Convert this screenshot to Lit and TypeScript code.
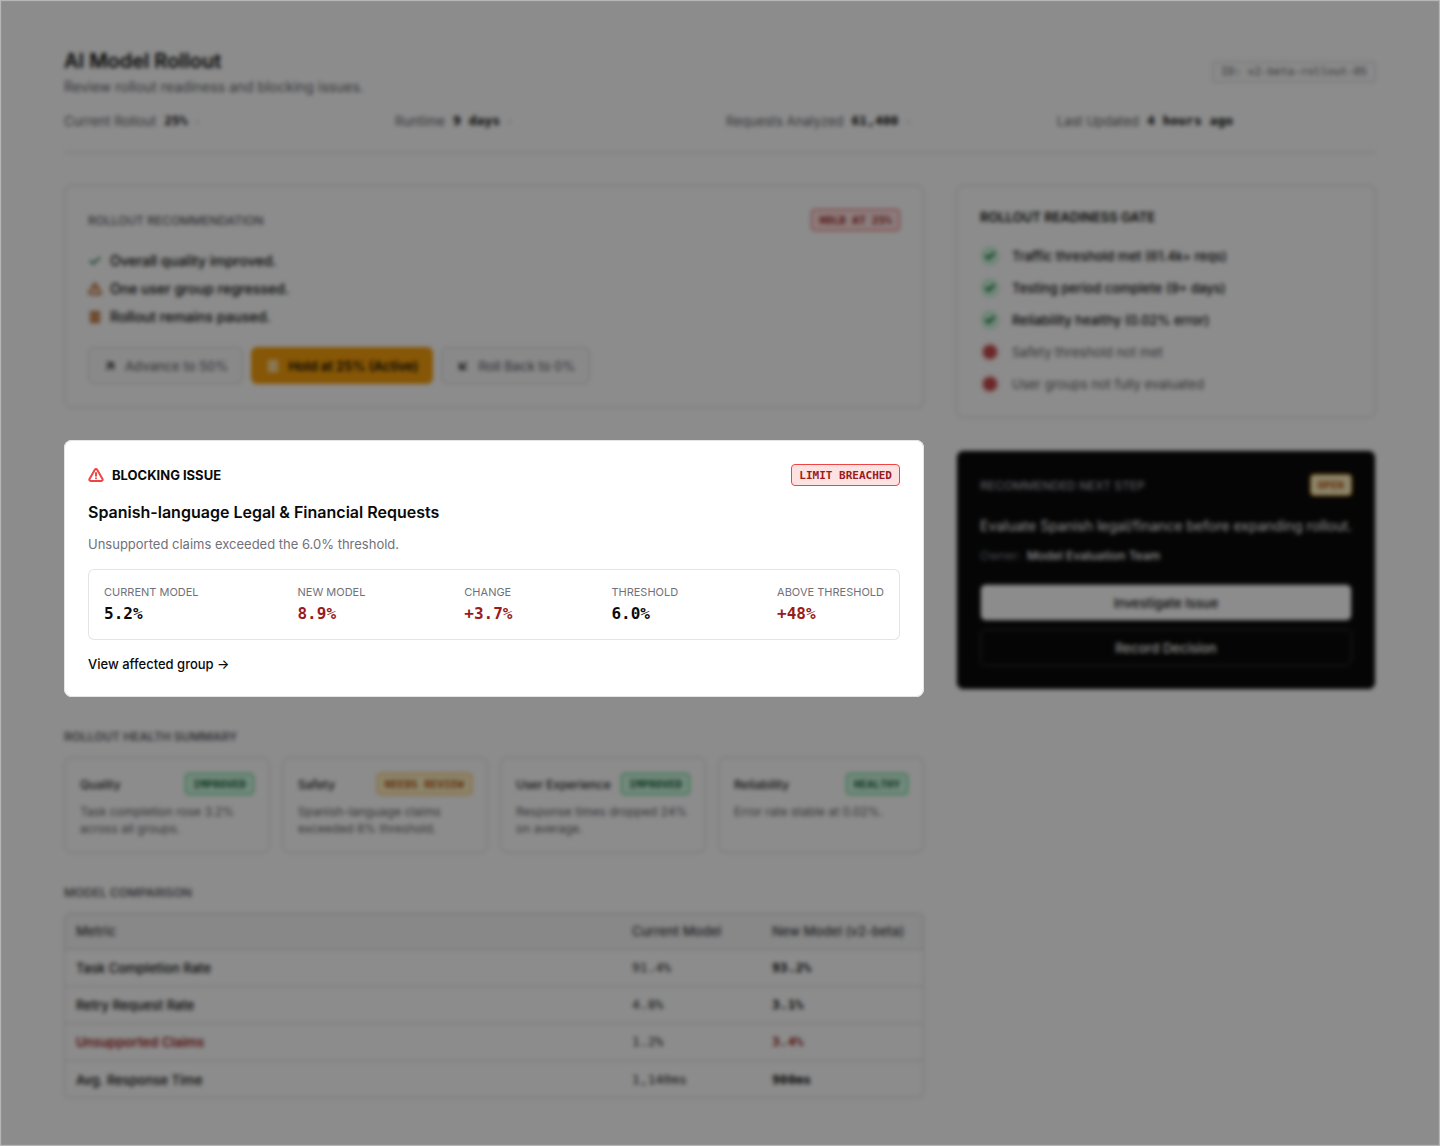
import { LitElement, html, css, svg } from "lit";
import { customElement } from "lit/decorators.js";
import { classMap } from "lit/directives/class-map.js";

type Tone = "danger" | "warning" | "success";

const badge = (text: string, tone: Tone) =>
  html`<span class=${classMap({ badge: true, [tone]: true })}>${text}</span>`;

const icon = (size: number, body: unknown, weight = 2) => html`<svg
  class="icon"
  width=${size}
  height=${size}
  viewBox="0 0 24 24"
  fill="none"
  stroke="currentColor"
  stroke-width=${weight}
  stroke-linecap="round"
  stroke-linejoin="round"
  aria-hidden="true"
>${body}</svg>`;

const checkShape = svg`<path d="M20 6 9 17l-5-5" />`;
const alertShape = svg`<path
    d="m21.730 18-8-14a2 2 0 0 0-3.480 0l-8 14A2 2 0 0 0 4 21h16a2 2 0 0 0 1.730-3"
  /><path d="M12 9v4M12 17h.01" />`;
const pauseShape = svg`<rect x="14" y="3" width="5" height="18" rx="1" /><rect x="5" y="3" width="5" height="18" rx="1" />`;
const upShape = svg`<path d="M7 7h10v10M7 17 17 7" />`;
const downShape = svg`<path d="M17 7 7 17M17 17H7V7" />`;

const facts = [
  ["Current Rollout", "25%"],
  ["Runtime", "9 days"],
  ["Requests Analyzed", "61,400"],
  ["Last Updated", "4 hours ago"],
];

const gates = [
  { label: "Traffic threshold met (61.4k+ reqs)", met: true },
  { label: "Testing period complete (9+ days)", met: true },
  { label: "Reliability healthy (0.02% error)", met: true },
  { label: "Safety threshold not met", met: false },
  { label: "User groups not fully evaluated", met: false },
];

const stats = [
  { label: "CURRENT MODEL", value: "5.2%", bad: false },
  { label: "NEW MODEL", value: "8.9%", bad: true },
  { label: "CHANGE", value: "+3.7%", bad: true },
  { label: "THRESHOLD", value: "6.0%", bad: false },
  { label: "ABOVE THRESHOLD", value: "+48%", bad: true },
];

const health: { name: string; status: string; tone: Tone; note: string }[] = [
  { name: "Quality", status: "IMPROVED", tone: "success", note: "Task completion rose 3.2% across all groups." },
  { name: "Safety", status: "NEEDS REVIEW", tone: "warning", note: "Spanish-language claims exceeded 6% threshold." },
  { name: "User Experience", status: "IMPROVED", tone: "success", note: "Response times dropped 24% on average." },
  { name: "Reliability", status: "HEALTHY", tone: "success", note: "Error rate stable at 0.02%." },
];

const comparison = [
  { metric: "Task Completion Rate", current: "91.4%", next: "93.2%", bad: false },
  { metric: "Retry Request Rate", current: "4.8%", next: "3.1%", bad: false },
  { metric: "Unsupported Claims", current: "1.2%", next: "3.4%", bad: true },
  { metric: "Avg. Response Time", current: "1,140ms", next: "900ms", bad: false },
];

@customElement("app-root")
export class AppRoot extends LitElement {
  static styles = css`
    :host {
      --mono: "DejaVu Sans Mono", "Liberation Mono", monospace;
      --line: #d4d4d8;
      --soft: #5f5f68;
      display: block;
      min-height: 100vh;
      background: #fff;
      color: #0a0a0a;
      font-family: Inter, "Liberation Sans", sans-serif;
      font-size: 13px;
      line-height: 20px;
    }
    * { box-sizing: border-box; }
    h1, h2, h3, p, ul, dl, dd { margin: 0; padding: 0; }
    ul { list-style: none; }
    .icon { flex: none; display: block; }
    .page { padding: 48px 64px; }

    .top { display: flex; align-items: center; justify-content: space-between; }
    h1 { font-size: 20px; line-height: 26px; font-weight: 600; margin-bottom: 4px; }
    .lead { font-size: 14px; line-height: 18px; color: var(--soft); }
    .tag {
      padding: 0 8px;
      border: 1px solid var(--line);
      border-radius: 4px;
      background: #fafafa;
      color: var(--soft);
      font: 11px/20px var(--mono);
    }
    .facts {
      display: grid;
      grid-template-columns: repeat(4, 1fr);
      gap: 12px;
      margin: 16px 0 32px;
      padding-bottom: 22px;
      border-bottom: 1px solid var(--line);
      line-height: 18px;
    }
    .fact { display: flex; gap: 8px; }
    .fact dt { color: var(--soft); }
    .fact dd { font: 700 13px/18px var(--mono); }
    .fact:not(:last-child)::after { content: "·"; color: #71717a; }

    .layout {
      display: grid;
      grid-template-columns: minmax(0, 1fr) 420px;
      gap: 32px;
      align-items: start;
    }
    .column { display: flex; flex-direction: column; gap: 32px; min-width: 0; }
    .card {
      padding: 24px;
      border-radius: 8px;
      background: #fff;
      box-shadow: inset 0 0 0 1px var(--line);
    }
    .card-head { display: flex; align-items: center; justify-content: space-between; height: 22px; }
    .label { font-size: 12px; line-height: 17px; font-weight: 600; }
    .muted { color: var(--soft); font-weight: 500; }
    .section .muted { font-weight: 600; }
    .strong { font-size: 13px; }
    .badge {
      flex: none;
      padding: 2px 7px 0;
      border: 1px solid;
      border-radius: 4px;
      font: 700 11px/18px var(--mono);
    }
    .danger { background: #fee2e2; border-color: #ef4444; color: #991b1b; }
    .warning { background: #fef3c7; border-color: #f59e0b; color: #b45309; }
    .success { background: #d1fae5; border-color: #22c55e; color: #166534; }

    .summary { display: grid; gap: 8px; margin: 20px 0; font-size: 14px; font-weight: 500; }
    .summary li { display: flex; align-items: center; gap: 8px; }
    .green { color: #15703d; }
    .amber { color: #b45309; }
    .actions { display: flex; flex-wrap: wrap; gap: 8px; }
    button {
      display: flex;
      align-items: center;
      justify-content: center;
      gap: 8px;
      height: 37px;
      padding: 0 14px;
      border: 1px solid var(--line);
      border-radius: 6px;
      background: #fafafa;
      color: #71717a;
      font: 500 13px/20px Inter, sans-serif;
    }
    button .icon { color: #52525b; }
    button.active { border-color: #f59e0b; background: #f59e0b; color: #0a0a0a; font-weight: 600; }
    .active .icon { color: #fff3d6; }

    .spotlight { --line: #e4e4e7; position: relative; z-index: 2; }
    .issue { display: flex; align-items: center; gap: 8px; font-weight: 700; }
    .alert { color: #ef4444; }
    .spotlight h3 { margin: 16px 0 12px; font-size: 16px; line-height: 21px; font-weight: 600; }
    .detail { line-height: 18px; color: #71717a; }
    .stats {
      display: flex;
      justify-content: space-between;
      gap: 16px;
      margin: 16px 0;
      padding: 16px;
      border-radius: 6px;
      box-shadow: inset 0 0 0 1px var(--line);
    }
    .stats dt { margin-bottom: 4px; font-size: 11px; line-height: 15px; color: #71717a; }
    .stats dd { font: 700 16px/20px var(--mono); }
    .stats .bad, .bad { color: #991b1b; }
    .link { display: block; width: fit-content; line-height: 17px; font-weight: 500; color: inherit; text-decoration: none; }

    .section .label { line-height: 16px; margin-bottom: 12px; }
    .health { display: grid; grid-template-columns: repeat(4, minmax(0, 1fr)); gap: 12px; }
    .health .card { padding: 16px; font-size: 12px; line-height: 17px; color: var(--soft); }
    .health h3 { font-size: 12px; font-weight: 500; color: #27272a; white-space: nowrap; }
    .health p { margin-top: 8px; }

    .frame { border-radius: 6px; box-shadow: inset 0 0 0 1px var(--line); overflow: hidden; }
    table { width: 100%; border-collapse: separate; border-spacing: 0; table-layout: fixed; }
    th, td { height: 37px; padding: 0 12px; text-align: left; font-weight: 500; border-bottom: 1px solid var(--line); }
    tbody tr:last-child > * { border-bottom: 0; }
    thead th { background: rgba(0, 0, 0, 0.03); color: #3f3f46; }
    .current { width: 140px; }
    .next { width: 164px; }
    td { font: 13px/20px var(--mono); color: #27272a; }
    td:last-child { font-weight: 700; color: #0a0a0a; }
    tr.bad td:last-child { color: #991b1b; }
    tr.bad th { font-weight: 600; }

    .gates { display: grid; gap: 12px; margin-top: 20px; font-weight: 500; }
    .gates li { display: flex; align-items: center; gap: 12px; }
    .dot {
      display: grid;
      place-items: center;
      width: 20px;
      height: 20px;
      border: 1px solid #ecfdf3;
      border-radius: 50%;
      background: #c6f6d8;
      color: #14532d;
    }
    .unmet { color: var(--soft); font-weight: 400; }
    .unmet .dot { background: #c24a4a; border: 3px solid #fee2e2; }

    .dark { --line: #e4e4e7; background: #0a0a0a; color: #fff; }
    .dark .label { color: #a1a1aa; }
    .step { margin: 20px 0 12px; font-size: 14px; white-space: nowrap; }
    .owner { display: flex; gap: 6px; margin-bottom: 20px; font-size: 12px; line-height: 16px; color: #85858f; }
    .owner b { font-weight: 500; color: #fff; }
    .dark button { width: 100%; background: #0a0a0a; border-color: #3f3f46; color: #fff; }
    .dark .primary { margin-bottom: 8px; background: #fff; color: #0a0a0a; }

    .scrim {
      position: fixed;
      inset: 0;
      z-index: 1;
      background: rgba(0, 0, 0, 0.45);
      backdrop-filter: blur(2px);
      box-shadow: inset 0 0 1px 1px rgba(255, 255, 255, 0.4);
    }
  `;

  render() {
    return html`
      <div class="page">
        <header>
          <div class="top">
            <div>
              <h1>AI Model Rollout</h1>
              <p class="lead">Review rollout readiness and blocking issues.</p>
            </div>
            <span class="tag">ID: v2-beta-rollout-05</span>
          </div>
          <dl class="facts">
            ${facts.map(([k, v]) => html`<div class="fact"><dt>${k}</dt><dd>${v}</dd></div>`)}
          </dl>
        </header>
        <div class="layout">
          <main class="column">
            <section class="card">
              <div class="card-head">
                <h2 class="label muted">ROLLOUT RECOMMENDATION</h2>
                ${badge("HOLD AT 25%", "danger")}
              </div>
              <ul class="summary">
                <li><span class="green">${icon(14, checkShape, 3)}</span>Overall quality improved.</li>
                <li><span class="amber">${icon(14, alertShape, 3)}</span>One user group regressed.</li>
                <li><span class="amber">${icon(14, pauseShape, 3)}</span>Rollout remains paused.</li>
              </ul>
              <div class="actions">
                <button type="button">${icon(14, upShape, 4)}Advance to 50%</button>
                <button type="button" class="active">${icon(14, pauseShape, 3)}Hold at 25% (Active)</button>
                <button type="button">${icon(14, downShape, 4)}Roll Back to 0%</button>
              </div>
            </section>

            <section class="card spotlight">
              <div class="card-head">
                <h2 class="label strong issue"><span class="alert">${icon(16, alertShape, 3)}</span>BLOCKING ISSUE</h2>
                ${badge("LIMIT BREACHED", "danger")}
              </div>
              <h3>Spanish-language Legal &amp; Financial Requests</h3>
              <p class="detail">Unsupported claims exceeded the 6.0% threshold.</p>
              <dl class="stats">
                ${stats.map(
                  (s) => html`<div><dt>${s.label}</dt><dd class=${classMap({ bad: s.bad })}>${s.value}</dd></div>`
                )}
              </dl>
              <a class="link" href="#affected-group">View affected group →</a>
            </section>

            <section class="section">
              <h2 class="label muted">ROLLOUT HEALTH SUMMARY</h2>
              <div class="health">
                ${health.map(
                  (h) => html`<article class="card">
                    <div class="card-head"><h3>${h.name}</h3>${badge(h.status, h.tone)}</div>
                    <p>${h.note}</p>
                  </article>`
                )}
              </div>
            </section>

            <section class="section">
              <h2 class="label muted">MODEL COMPARISON</h2>
              <div class="frame">
                <table>
                  <thead>
                    <tr>
                      <th scope="col">Metric</th>
                      <th scope="col" class="current">Current Model</th>
                      <th scope="col" class="next">New Model (v2-beta)</th>
                    </tr>
                  </thead>
                  <tbody>
                    ${comparison.map(
                      (r) => html`<tr class=${classMap({ bad: r.bad })}>
                        <th scope="row">${r.metric}</th><td>${r.current}</td><td>${r.next}</td>
                      </tr>`
                    )}
                  </tbody>
                </table>
              </div>
            </section>
          </main>

          <aside class="column">
            <section class="card">
              <h2 class="label strong">ROLLOUT READINESS GATE</h2>
              <ul class="gates">
                ${gates.map(
                  (g) => html`<li class=${classMap({ unmet: !g.met })}>
                    <span class="dot">${g.met ? icon(12, checkShape, 4) : null}</span>${g.label}
                  </li>`
                )}
              </ul>
            </section>
            <section class="card dark">
              <div class="card-head">
                <h2 class="label muted">RECOMMENDED NEXT STEP</h2>
                ${badge("OPEN", "warning")}
              </div>
              <p class="step">Evaluate Spanish legal/finance before expanding rollout.</p>
              <p class="owner">Owner: <b>Model Evaluation Team</b></p>
              <button type="button" class="primary">Investigate Issue</button>
              <button type="button">Record Decision</button>
            </section>
          </aside>
        </div>
      </div>
      <div class="scrim"></div>
    `;
  }
}
